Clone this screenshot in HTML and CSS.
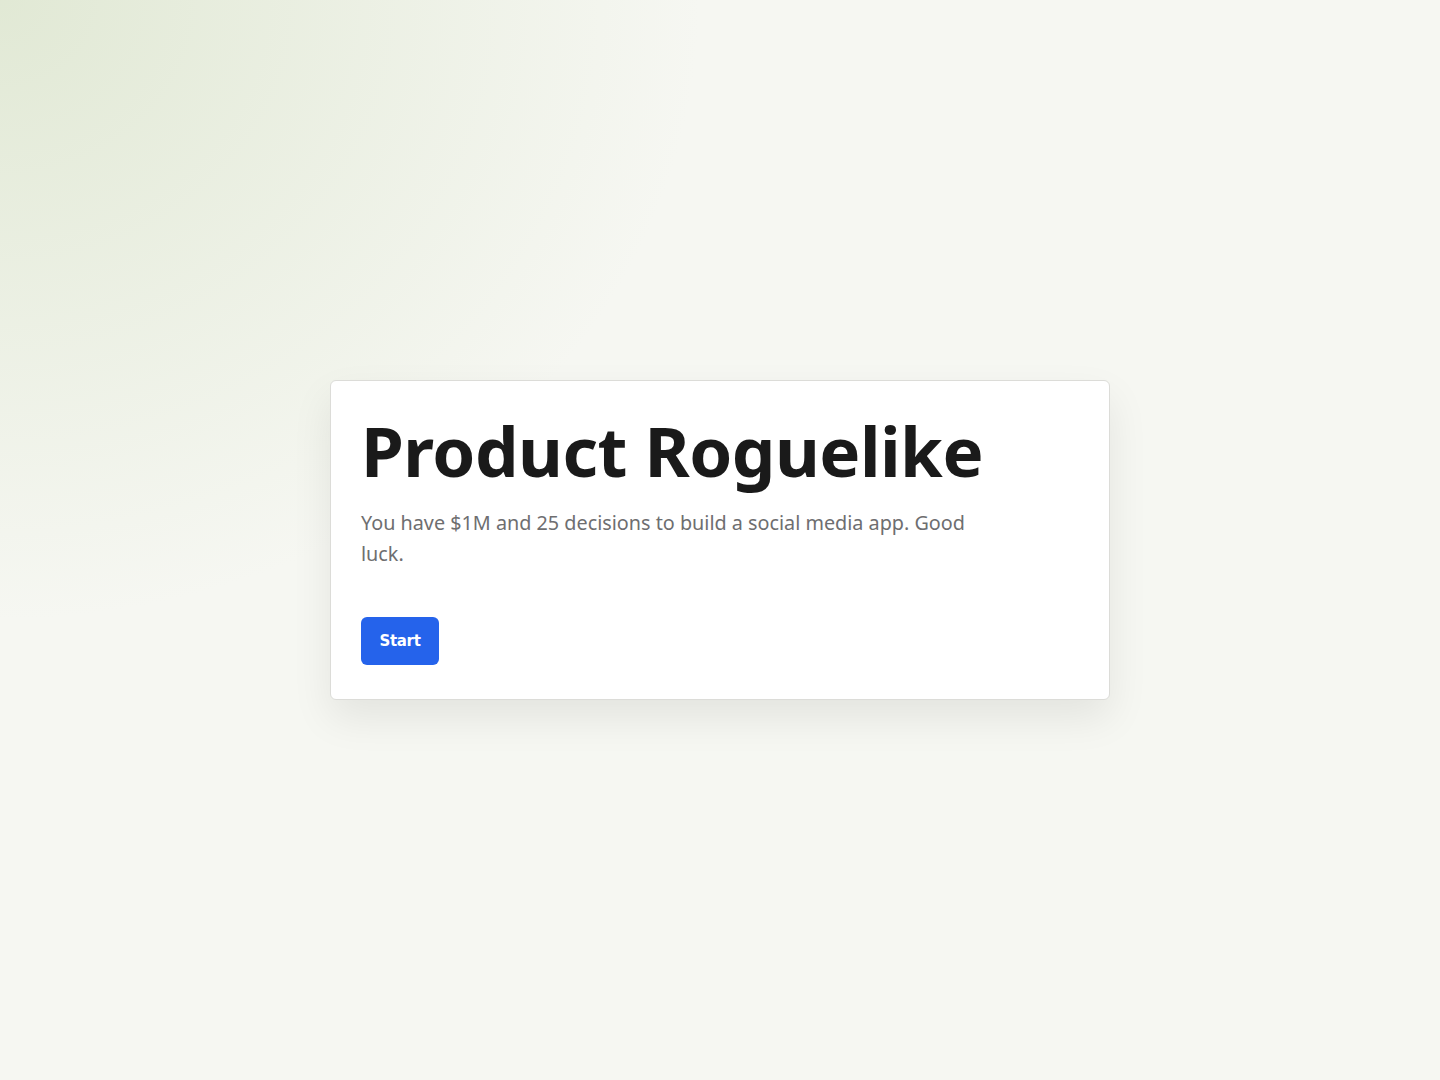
FILE: index.html
```html
<!DOCTYPE html>
<html lang="en">
  <head>
    <meta charset="UTF-8" />
    <meta name="viewport" content="width=device-width, initial-scale=1.0" />
    <title>Product Roguelike</title>
    <link rel="stylesheet" href="styles.css">
  </head>
  <body>
    <main class="screen">
      <div class="card">
        <h1 class="title">Product Roguelike</h1>
        <p class="intro">
          You have $1M and 25 decisions to build a social media app. Good luck.
        </p>
        <button class="start">Start</button>
      </div>
    </main>
  </body>
</html>
```

FILE: styles.css
```css
* {
  margin: 0;
  padding: 0;
  box-sizing: border-box;
}

body {
  font-family: "Noto Sans", "Open Sans", sans-serif;
  color: #1a1a1a;
  background:
    radial-gradient(ellipse 700px 620px at 0 0, rgba(218, 228, 203, 0.75), rgba(218, 228, 203, 0) 100%),
    #f6f7f2;
  min-height: 100vh;
}

.screen {
  min-height: 100vh;
  display: flex;
  align-items: center;
  justify-content: center;
}

.card {
  width: 780px;
  background: #fff;
  border: 1px solid #dcdcd8;
  border-radius: 6px;
  padding: 30px 30px 34px;
  box-shadow: 0 18px 40px rgba(0, 0, 0, 0.08);
}

.title {
  font-size: 69px;
  font-weight: 700;
  line-height: 1.15;
  letter-spacing: -0.5px;
  color: #1a1a1a;
}

.intro {
  max-width: 640px;
  margin-top: 17px;
  font-size: 19.8px;
  line-height: 31px;
  color: #6e6e70;
}

.start {
  margin-top: 48px;
  height: 48px;
  width: 78px;
  border: none;
  border-radius: 6px;
  background: #2563eb;
  color: #fff;
  font-family: "DejaVu Sans", sans-serif;
  font-weight: 700;
  font-size: 15px;
  letter-spacing: -0.3px;
}
```
